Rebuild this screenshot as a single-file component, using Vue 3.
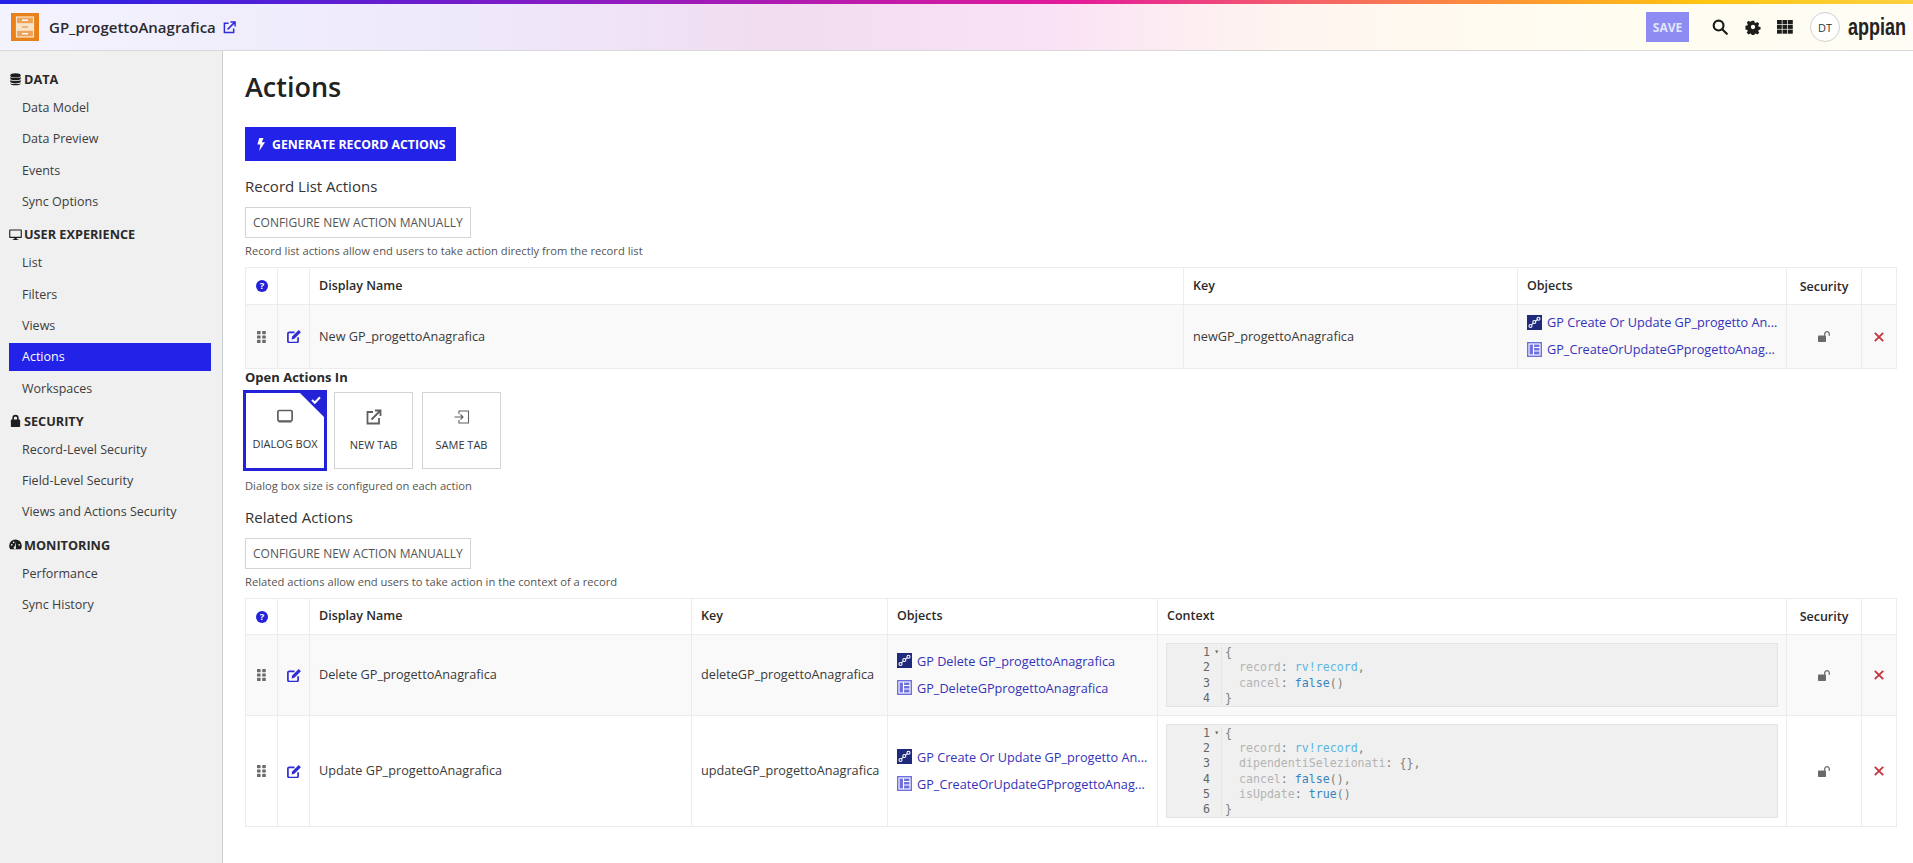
<template>
  <div class="wrapper">
    <div class="strip"></div>
    <header class="header">
      <div class="title-section">
        <svg class="record-logo" viewBox="0 0 28 28">
          <rect width="28" height="28" fill="#e8811a" />
          <rect x="5.500" y="4" width="17" height="20" fill="#eea257" stroke="#fbe6cc" stroke-width="1.200" />
          <rect x="6" y="10.200" width="16" height="7.600" fill="#f9e3c8" />
          <rect x="11" y="6.500" width="6" height="1.400" fill="#fff" />
          <rect x="11" y="13.300" width="6" height="1.400" fill="#e8a35c" />
          <rect x="11" y="20" width="6" height="1.400" fill="#fff" />
        </svg>
        <span class="record-name">GP_progettoAnagrafica</span>
        <svg class="open-icon" viewBox="0 0 14 14" fill="none" stroke="#2f2bd6" stroke-width="1.600">
          <path d="M6 2.500H1.500v10h10V8" />
          <path d="M5 9l7.500-7.500M8 1h5v5" />
        </svg>
      </div>
      <div class="icon-section">
        <button class="save">SAVE</button>
        <svg class="top-icon search" viewBox="0 0 16 16" fill="none" stroke="#1d1d1d" stroke-width="2.200">
          <circle cx="6.600" cy="6.600" r="4.900" />
          <path d="M10.200 10.200l4.600 4.600" stroke-linecap="round" />
        </svg>
        <svg class="top-icon gear" viewBox="0 0 16 16">
          <path fill="#1d1d1d" fill-rule="evenodd" d="M6.600 1h2.800l.4 2 1.300.6 1.800-1.100 2 2-1.100 1.800.6 1.300 2 .4v2.800l-2 .4-.6 1.300 1.100 1.800-2 2-1.800-1.100-1.300.6-.4 2H6.600l-.4-2-1.300-.6-1.800 1.100-2-2 1.100-1.800-.6-1.300-2-.4V6.600l2-.4.6-1.300L1.100 3.100l2-2 1.800 1.100 1.300-.6zM8 5.600a2.400 2.400 0 1 0 0 4.800 2.400 2.400 0 0 0 0-4.800z" transform="translate(.8 .8) scale(.9)" />
        </svg>
        <svg class="top-icon grid" viewBox="0 0 16 14" fill="#1d1d1d">
          <template v-for="r in 3" :key="r">
            <rect v-for="c in 3" :key="c" :x="(c - 1) * 5.500" :y="(r - 1) * 4.800" width="4.800" height="4.100" />
          </template>
        </svg>
        <span class="avatar">DT</span>
        <span class="appian">appian</span>
      </div>
    </header>

    <div class="body">
      <nav class="sidebar">
        <div v-for="group in nav" :key="group.title" class="nav-group">
          <div class="nav-title">
            <svg class="nav-icon" viewBox="0 0 14 14" fill="#1d1d1d">
              <template v-if="group.icon === 'db'">
                <ellipse cx="7" cy="2.600" rx="5.600" ry="2.200" />
                <path d="M1.400 4.200c1 1.500 10.200 1.500 11.200 0v2.200c-1 2-10.200 2-11.200 0zM1.400 7.600c1 1.500 10.200 1.500 11.200 0v2.200c-1 2-10.200 2-11.200 0zM1.400 11c1 1.300 10.200 1.300 11.200 0v.6c-1 2.200-10.200 2.200-11.200 0z" />
              </template>
              <path v-else-if="group.icon === 'screen'" fill-rule="evenodd" d="M1 1.500h12a.8.800 0 0 1 .8.800v7.600a.8.800 0 0 1-.8.800H8.300v1.300h1.800v1H3.900v-1h1.800v-1.300H1a.8.800 0 0 1-.8-.8V2.300A.8.800 0 0 1 1 1.500zM1.400 2.700v6.800h11.200V2.700z" />
              <path v-else-if="group.icon === 'lock'" fill-rule="evenodd" d="M3.600 6V4.300a3.400 3.400 0 0 1 6.800 0V6h.8c.5 0 .8.300.8.800v6.400c0 .5-.3.800-.8.800H2.800c-.5 0-.8-.3-.8-.8V6.800c0-.5.300-.8.800-.8zM5.300 6h3.400V4.300a1.700 1.700 0 0 0-3.400 0z" />
              <path v-else fill-rule="evenodd" d="M7 1.500a6.800 6.800 0 0 1 6.800 6.800c0 1.500-.4 2.800-1.200 3.900H1.400A6.700 6.700 0 0 1 .2 8.300 6.800 6.800 0 0 1 7 1.500zM7.500 4.500 6 9.200a1.300 1.300 0 1 0 1.300.4zM3 6.500a.9.900 0 1 0 0 1.800.9.900 0 0 0 0-1.800zM11 6.500a.9.900 0 1 0 0 1.800.9.900 0 0 0 0-1.800zM5 3.800a.9.900 0 1 0 0 1.800.9.900 0 0 0 0-1.800z" />
            </svg>
            {{ group.title }}
          </div>
          <a v-for="item in group.items" :key="item" class="nav-item" :class="{ active: item === 'Actions' }">{{ item }}</a>
        </div>
      </nav>

      <main class="content">
        <h1 class="page-title">Actions</h1>
        <button class="generate">
          <svg class="bolt" viewBox="0 0 8 13"><path fill="#fff" d="M2.300 0h4.200L4.800 4.300H8L2.200 13l1.200-6.500H.4z" /></svg>
          GENERATE RECORD ACTIONS
        </button>

        <h2 class="section-title list-title">Record List Actions</h2>
        <button class="configure">CONFIGURE NEW ACTION MANUALLY</button>
        <p class="hint">Record list actions allow end users to take action directly from the record list</p>

        <table class="grid-table">
          <colgroup>
            <col v-for="(w, i) in listCols" :key="i" :style="{ width: w + 'px' }" />
          </colgroup>
          <thead>
            <tr class="head-row list-head">
              <th class="center"><svg class="help" viewBox="0 0 12 12"><circle cx="6" cy="6" r="6" fill="#2322d8" /><text x="6" y="9.300" text-anchor="middle" class="help-mark">?</text></svg></th>
              <th></th>
              <th>Display Name</th>
              <th>Key</th>
              <th>Objects</th>
              <th class="center">Security</th>
              <th></th>
            </tr>
          </thead>
          <tbody>
            <tr class="shaded list-row">
              <td class="center"><svg class="drag" viewBox="0 0 9 12" fill="#6b6b6b"><rect v-for="d in dots" :key="d.k" :x="d.x" :y="d.y" width="3.600" height="3.200" rx=".6" /></svg></td>
              <td class="center"><svg class="edit" viewBox="0 0 14 13"><path fill="none" stroke="#2f2bd6" stroke-width="1.700" d="M7.500 2.300H2.300A1.400 1.400 0 0 0 .9 3.700v7.400c0 .8.600 1.400 1.400 1.400h7.400c.8 0 1.400-.6 1.400-1.400V7.200" /><path fill="#2f2bd6" d="M11.700.1l2.200 2.200-6.500 6.500-2.900.7.700-2.900z" /></svg></td>
              <td>New GP_progettoAnagrafica</td>
              <td>newGP_progettoAnagrafica</td>
              <td>
                <a class="object"><svg class="obj-icon" viewBox="0 0 15 15"><rect width="15" height="15" fill="#1f2a7c" /><g fill="none" stroke="#fff" stroke-width="1.100"><circle cx="3.500" cy="11" r="1.500" /><circle cx="7.300" cy="7" r="1.500" /><circle cx="11.500" cy="3.800" r="1.500" /><path d="M4.500 9.900l1.800-1.800M8.500 6.100l1.800-1.400" /></g></svg>GP Create Or Update GP_progetto An...</a>
                <a class="object"><svg class="obj-icon" viewBox="0 0 15 15"><rect width="15" height="15" fill="#6e6fe0" /><g fill="none" stroke="#fff" stroke-width="1.100"><rect x="2" y="2" width="11" height="11" /><path d="M6.500 2v11M6.500 5.500H13M6.500 9H13" /></g></svg>GP_CreateOrUpdateGPprogettoAnag...</a>
              </td>
              <td class="center"><svg class="unlock" viewBox="0 0 12 11"><path fill="#6a6a6a" d="M0 5.300c0-.4.300-.7.700-.7h6.600c.4 0 .7.300.7.700V10c0 .6-.4 1-1 1H1c-.6 0-1-.4-1-1z" /><path fill="none" stroke="#6a6a6a" stroke-width="1.300" d="M6.700 4.800V3a2.300 2.300 0 0 1 4.600 0v1.800" /></svg></td>
              <td class="center"><svg class="remove" viewBox="0 0 10 10"><path stroke="#c8353f" stroke-width="1.900" d="M.8.800l8.400 8.400M9.200.8L.8 9.200" /></svg></td>
            </tr>
          </tbody>
        </table>

        <div class="open-label">Open Actions In</div>
        <div class="cards">
          <div v-for="c in cards" :key="c.label" class="card" :class="{ selected: c.selected }">
            <span v-if="c.selected" class="corner"></span>
            <svg v-if="c.selected" class="tick" viewBox="0 0 10 8"><path fill="none" stroke="#fff" stroke-width="2" d="M1 4l2.800 2.800L9 1.200" /></svg>
            <svg class="card-icon" viewBox="0 0 16 16" fill="none" stroke="#5f5f5f" stroke-width="1.400">
              <template v-if="c.icon === 'dialog'">
                <rect x=".9" y="2.500" width="14.200" height="10.500" rx="1.200" stroke-width="1.700" />
                <path d="M1.500 13.700h13" stroke-width="1.600" />
              </template>
              <template v-else-if="c.icon === 'new'">
                <path d="M7 3H1.500v11.500H13V9" stroke-width="1.800" />
                <path d="M5.500 10.500L14 2M9 1.500h5.500V7" stroke-width="1.800" />
              </template>
              <template v-else>
                <path d="M5 5V2h9.500v12H5v-3" stroke-width="1.100" />
                <path d="M.5 8h8M6.500 5.500L9 8l-2.500 2.500" stroke-width="1.100" />
              </template>
            </svg>
            <span class="card-label">{{ c.label }}</span>
          </div>
        </div>
        <p class="hint dialog-hint">Dialog box size is configured on each action</p>

        <h2 class="section-title related-title">Related Actions</h2>
        <button class="configure">CONFIGURE NEW ACTION MANUALLY</button>
        <p class="hint">Related actions allow end users to take action in the context of a record</p>

        <table class="grid-table">
          <colgroup>
            <col v-for="(w, i) in relatedCols" :key="i" :style="{ width: w + 'px' }" />
          </colgroup>
          <thead>
            <tr class="head-row">
              <th class="center"><svg class="help" viewBox="0 0 12 12"><circle cx="6" cy="6" r="6" fill="#2322d8" /><text x="6" y="9.300" text-anchor="middle" class="help-mark">?</text></svg></th>
              <th></th>
              <th>Display Name</th>
              <th>Key</th>
              <th>Objects</th>
              <th>Context</th>
              <th class="center">Security</th>
              <th></th>
            </tr>
          </thead>
          <tbody>
            <tr v-for="(row, ri) in related" :key="row.key" :class="ri === 0 ? 'shaded short-row' : 'tall-row'">
              <td class="center"><svg class="drag" viewBox="0 0 9 12" fill="#6b6b6b"><rect v-for="d in dots" :key="d.k" :x="d.x" :y="d.y" width="3.600" height="3.200" rx=".6" /></svg></td>
              <td class="center"><svg class="edit" viewBox="0 0 14 13"><path fill="none" stroke="#2f2bd6" stroke-width="1.700" d="M7.500 2.300H2.300A1.400 1.400 0 0 0 .9 3.700v7.400c0 .8.600 1.400 1.400 1.400h7.400c.8 0 1.400-.6 1.400-1.400V7.200" /><path fill="#2f2bd6" d="M11.700.1l2.200 2.200-6.500 6.500-2.900.7.700-2.900z" /></svg></td>
              <td>{{ row.name }}</td>
              <td>{{ row.key }}</td>
              <td>
                <a class="object"><svg class="obj-icon" viewBox="0 0 15 15"><rect width="15" height="15" fill="#1f2a7c" /><g fill="none" stroke="#fff" stroke-width="1.100"><circle cx="3.500" cy="11" r="1.500" /><circle cx="7.300" cy="7" r="1.500" /><circle cx="11.500" cy="3.800" r="1.500" /><path d="M4.500 9.900l1.800-1.800M8.500 6.100l1.800-1.400" /></g></svg>{{ row.process }}</a>
                <a class="object"><svg class="obj-icon" viewBox="0 0 15 15"><rect width="15" height="15" fill="#6e6fe0" /><g fill="none" stroke="#fff" stroke-width="1.100"><rect x="2" y="2" width="11" height="11" /><path d="M6.500 2v11M6.500 5.500H13M6.500 9H13" /></g></svg>{{ row.form }}</a>
              </td>
              <td class="context">
                <div class="editor">
                  <div class="gutter">
                    <div v-for="(l, li) in row.code" :key="li" class="gutter-line">{{ li + 1 }}<span class="fold">{{ li === 0 ? '▾' : '' }}</span></div>
                  </div>
                  <div class="code">
                    <div v-for="(l, li) in row.code" :key="li" class="code-line">
                      <template v-for="(t, ti) in l" :key="ti"><span :class="t[0]">{{ t[1] }}</span></template>
                    </div>
                  </div>
                </div>
              </td>
              <td class="center"><svg class="unlock" viewBox="0 0 12 11"><path fill="#6a6a6a" d="M0 5.300c0-.4.300-.7.700-.7h6.600c.4 0 .7.300.7.700V10c0 .6-.4 1-1 1H1c-.6 0-1-.4-1-1z" /><path fill="none" stroke="#6a6a6a" stroke-width="1.300" d="M6.700 4.800V3a2.300 2.300 0 0 1 4.600 0v1.800" /></svg></td>
              <td class="center"><svg class="remove" viewBox="0 0 10 10"><path stroke="#c8353f" stroke-width="1.900" d="M.8.800l8.400 8.400M9.200.8L.8 9.200" /></svg></td>
            </tr>
          </tbody>
        </table>
      </main>
    </div>
  </div>
</template>

<script setup>
const nav = [
  { title: 'DATA', icon: 'db', items: ['Data Model', 'Data Preview', 'Events', 'Sync Options'] },
  { title: 'USER EXPERIENCE', icon: 'screen', items: ['List', 'Filters', 'Views', 'Actions', 'Workspaces'] },
  { title: 'SECURITY', icon: 'lock', items: ['Record-Level Security', 'Field-Level Security', 'Views and Actions Security'] },
  { title: 'MONITORING', icon: 'gauge', items: ['Performance', 'Sync History'] },
]

const listCols = [32, 32, 874, 334, 269, 75, 35]
const relatedCols = [32, 32, 382, 196, 270, 629, 75, 35]

const dots = []
for (let r = 0; r < 3; r++) {
  for (let c = 0; c < 2; c++) {
    dots.push({ k: `${r}-${c}`, x: c * 5.2, y: r * 4.4 })
  }
}

const cards = [
  { label: 'DIALOG BOX', icon: 'dialog', selected: true },
  { label: 'NEW TAB', icon: 'new' },
  { label: 'SAME TAB', icon: 'same' },
]

const related = [
  {
    name: 'Delete GP_progettoAnagrafica',
    key: 'deleteGP_progettoAnagrafica',
    process: 'GP Delete GP_progettoAnagrafica',
    form: 'GP_DeleteGPprogettoAnagrafica',
    code: [
      [['pun', '{']],
      [['key', '  record'], ['pun', ': '], ['var', 'rv!record'], ['pun', ',']],
      [['key', '  cancel'], ['pun', ': '], ['fn', 'false'], ['pun', '()']],
      [['pun', '}']],
    ],
  },
  {
    name: 'Update GP_progettoAnagrafica',
    key: 'updateGP_progettoAnagrafica',
    process: 'GP Create Or Update GP_progetto An...',
    form: 'GP_CreateOrUpdateGPprogettoAnag...',
    code: [
      [['pun', '{']],
      [['key', '  record'], ['pun', ': '], ['var', 'rv!record'], ['pun', ',']],
      [['key', '  dipendentiSelezionati'], ['pun', ': {},']],
      [['key', '  cancel'], ['pun', ': '], ['fn', 'false'], ['pun', '(),']],
      [['key', '  isUpdate'], ['pun', ': '], ['fn', 'true'], ['pun', '()']],
      [['pun', '}']],
    ],
  },
]
</script>

<style>
html,
body {
  margin: 0;
  background: #fff;
}
</style>

<style scoped>
.wrapper {
  height: 863px;
  display: flex;
  flex-direction: column;
  overflow: hidden;
  font-family: 'Open Sans', 'Liberation Sans', sans-serif;
  font-size: 13px;
  color: #2a2a2a;
  background: #fff;
}

.strip {
  height: 4px;
  flex: none;
  background: linear-gradient(90deg, #2322e8 0%, #7a1cc8 26%, #e41a9a 56%, #f4606a 68%, #fd9a30 80%, #ffc510 89%, #fdd040 100%);
}

.header {
  height: 46px;
  flex: none;
  display: flex;
  justify-content: space-between;
  align-items: center;
  padding: 0 8px 0 11px;
  border-bottom: 1px solid #d8d8d8;
  background: linear-gradient(90deg, #f3f3fe 0%, #eee8fa 26%, #f2dcf0 41%, #f9e2f5 55%, #fef2f0 65%, #fff9f0 73%, #fffdf0 86%, #fffdf5 100%);
}

.title-section {
  display: flex;
  align-items: center;
}

.record-logo {
  width: 28px;
  height: 28px;
}

.record-name {
  margin-left: 10px;
  font-size: 15px;
  font-weight: 600;
  color: #2a2a30;
}

.open-icon {
  width: 13px;
  height: 13px;
  margin-left: 7px;
}

.icon-section {
  display: flex;
  align-items: center;
}

.save {
  width: 43px;
  height: 30px;
  padding: 0;
  border: none;
  background: #8d8cf2;
  color: #e4e4fb;
  font-family: inherit;
  font-size: 12px;
  font-weight: 700;
}

.top-icon {
  display: block;
}

.search {
  width: 16px;
  height: 16px;
  margin-left: 23px;
}

.gear {
  width: 16px;
  height: 16px;
  margin-left: 17px;
}

.grid {
  width: 16px;
  height: 14px;
  margin-left: 16px;
}

.avatar {
  width: 30px;
  height: 30px;
  box-sizing: border-box;
  margin-left: 17px;
  border: 1px solid #d0d0d0;
  border-radius: 50%;
  display: flex;
  align-items: center;
  justify-content: center;
  font-size: 11px;
  background: #fff;
  color: #333;
}

.appian {
  width: 57px;
  margin-left: 8px;
  font-family: 'Liberation Sans', sans-serif;
  font-size: 24px;
  font-weight: 700;
  line-height: 26px;
  color: #222;
  white-space: nowrap;
  transform: scaleX(0.75);
  transform-origin: left center;
}

.body {
  flex: 1;
  display: flex;
  min-height: 0;
}

.sidebar {
  width: 223px;
  flex: none;
  box-sizing: border-box;
  padding: 19px 11px 0 9px;
  background: #f0f0f0;
  border-right: 1px solid #c9ced1;
}

.nav-title {
  display: flex;
  align-items: center;
  height: 18px;
  font-size: 12.700px;
  font-weight: 700;
  color: #2a2a2a;
  margin-bottom: 4px;
}

.nav-group {
  margin-bottom: 8px;
}

.nav-icon {
  width: 13px;
  height: 13px;
  margin-right: 2px;
  flex: none;
}

.nav-item {
  display: flex;
  align-items: center;
  height: 31.300px;
  padding-left: 13px;
  font-size: 12.500px;
  color: #3c3c3c;
}

.nav-item.active {
  height: 28px;
  margin: 1.650px 0;
  background: #2322e8;
  color: #fff;
}

.content {
  flex: 1;
  min-width: 0;
  padding: 18px 17px 0 22px;
}

.page-title {
  margin: 0;
  font-size: 27px;
  font-weight: 600;
  line-height: 36px;
  color: #222;
}

.generate {
  display: flex;
  align-items: center;
  height: 34px;
  margin-top: 22px;
  padding: 0 10px 0 12px;
  border: none;
  background: #2322e8;
  color: #fff;
  font-family: inherit;
  font-size: 12.300px;
  font-weight: 700;
}

.bolt {
  width: 8px;
  height: 13px;
  margin-right: 7px;
}

.section-title {
  margin: 0;
  font-size: 15px;
  font-weight: 400;
  line-height: 20px;
  color: #333;
}

.list-title {
  margin-top: 15px;
}

.related-title {
  margin-top: 13px;
}

.configure {
  display: block;
  height: 31px;
  margin-top: 11px;
  padding: 0 7px;
  border: 1px solid #d4d4d4;
  background: #fff;
  color: #555;
  font-family: inherit;
  font-size: 12px;
}

.hint {
  margin: 5px 0 8px;
  font-size: 11.200px;
  line-height: 16px;
  color: #555;
}

.grid-table {
  width: 1651px;
  table-layout: fixed;
  border-collapse: collapse;
}

.grid-table th,
.grid-table td {
  border: 1px solid #ececec;
  padding: 0 9px;
  text-align: left;
  vertical-align: middle;
  font-size: 12.700px;
}

.grid-table th {
  padding-bottom: 2px;
  font-size: 12.500px;
  font-weight: 600;
  color: #2a2a2a;
}

.grid-table td {
  padding-bottom: 2px;
  color: #3a3a3a;
}

.grid-table .center {
  padding: 0;
  text-align: center;
}

.head-row {
  height: 36px;
}

.list-head {
  height: 37px;
}

.list-row {
  height: 64px;
}

.short-row {
  height: 81px;
}

.tall-row {
  height: 111px;
}

.shaded {
  background: #f9f9f9;
}

.help {
  display: block;
  width: 12px;
  height: 12px;
  margin: 0 auto;
}

.help-mark {
  fill: #fff;
  font-size: 9.500px;
  font-weight: 700;
}

.drag {
  display: block;
  width: 9px;
  height: 12px;
  margin: 0 auto;
}

.edit {
  display: block;
  width: 14px;
  height: 13px;
  margin: 0 auto;
}

.object {
  display: flex;
  align-items: center;
  height: 27px;
  white-space: nowrap;
  color: #3433b8;
}

.obj-icon {
  width: 15px;
  height: 15px;
  margin-right: 5px;
  flex: none;
}

.unlock {
  display: block;
  width: 12px;
  height: 11px;
  margin: 0 auto;
}

.remove {
  display: block;
  width: 10px;
  height: 10px;
  margin: 0 auto;
}

.open-label {
  margin-top: -1px;
  font-size: 13px;
  font-weight: 700;
  line-height: 18px;
  color: #2a2a2a;
}

.cards {
  display: flex;
  gap: 9px;
  margin: 6px 0 0 -2px;
}

.card {
  position: relative;
  width: 79px;
  height: 77px;
  box-sizing: border-box;
  border: 1px solid #d4d4d4;
  display: flex;
  flex-direction: column;
  align-items: center;
  background: #fff;
}

.card.selected {
  width: 84px;
  height: 81px;
  margin: -2px -2px -2px 0;
  border: 3px solid #2322d8;
}

.corner {
  position: absolute;
  top: 0;
  right: 0;
  width: 0;
  height: 0;
  border-top: 24px solid #2322d8;
  border-left: 24px solid transparent;
}

.tick {
  position: absolute;
  top: 3px;
  right: 3px;
  width: 10px;
  height: 8px;
}

.card-icon {
  width: 16px;
  height: 16px;
  margin-top: 16px;
}

.selected .card-icon {
  margin-top: 15px;
}

.card-label {
  margin-top: 12px;
  font-size: 11px;
  line-height: 16px;
  color: #333;
}

.hint.dialog-hint {
  margin: 9px 0 0;
}

.grid-table td.context {
  padding: 0 8px;
}

.editor {
  display: flex;
  padding: 1px 0 0;
  border: 1px solid #e4e4e4;
  background: #f0f0f0;
  font-family: 'DejaVu Sans Mono', 'Liberation Mono', monospace;
  font-size: 11.600px;
  line-height: 15.300px;
}

.gutter {
  width: 54px;
  flex: none;
  border-right: 1px solid #e6e6e6;
  color: #666;
  text-align: right;
}

.gutter-line {
  height: 15.300px;
  padding-right: 11px;
  position: relative;
}

.fold {
  position: absolute;
  right: 2px;
  top: -1px;
  font-size: 8px;
}

.code {
  padding-left: 3px;
}

.code-line {
  height: 15.300px;
  white-space: pre;
}

.key {
  color: #b4b4b4;
}

.pun {
  color: #808080;
}

.var {
  color: #5ab6e0;
}

.fn {
  color: #3a84bd;
}
</style>
